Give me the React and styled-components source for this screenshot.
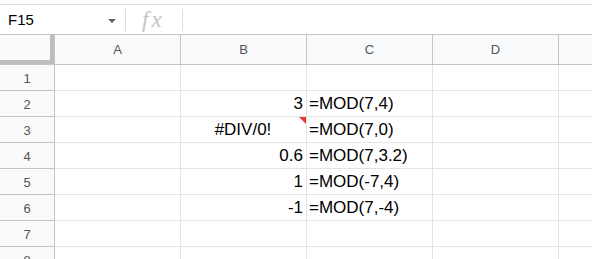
import React from 'react'
import styled, { createGlobalStyle } from 'styled-components'

const Global = createGlobalStyle`
    html, body {
        margin: 0;
        padding: 0;
        background: #fff;
        overflow: hidden;
    }
    body {
        font-family: "Liberation Sans", Arial, sans-serif;
    }
    *, *::before, *::after {
        box-sizing: border-box;
    }
`

const Page = styled.div`
    width: 592px;
    height: 259px;
    overflow: hidden;
    background: #fff;
`

const TopStrip = styled.div`
    height: 5px;
    border-bottom: 1px solid #e0e0e0;
`

const FormulaBar = styled.div`
    display: flex;
    align-items: center;
    height: 29px;
`

const NameBox = styled.div`
    display: flex;
    align-items: center;
    justify-content: space-between;
    width: 125px;
    padding: 0 9px 0 8px;
    font-size: 15px;
    color: #000;
`

const Caret = styled.span`
    width: 0;
    height: 0;
    margin-top: 2px;
    border-left: 4px solid transparent;
    border-right: 4px solid transparent;
    border-top: 4px solid #5f6368;
`

const Divider = styled.div`
    width: 1px;
    height: 22px;
    background: #dadce0;
`

const Fx = styled.div`
    width: 56px;
    padding-left: 16px;
    font-family: "Liberation Serif", "Times New Roman", serif;
    font-style: italic;
    font-size: 23px;
    letter-spacing: 3px;
    color: #c4c4c4;
    line-height: 1;
`

const Sheet = styled.div`
    border-top: 1px solid #c4c4c4;
`

const Row = styled.div`
    display: flex;
    height: ${p => p.$h}px;
`

const Corner = styled.div`
    flex: none;
    width: 55px;
    background: #f8f9fa;
    border-right: 1px solid #c4c4c4;
    border-bottom: 1px solid #c4c4c4;
    box-shadow: inset -4px -4px 0 #bdbdbd;
`

const ColHead = styled.div`
    flex: none;
    width: 126px;
    display: flex;
    align-items: center;
    justify-content: center;
    background: #f8f9fa;
    border-right: 1px solid #c4c4c4;
    border-bottom: 1px solid #c4c4c4;
    font-size: 13px;
    color: #555;
`

const RowHead = styled(ColHead)`
    width: 55px;
    padding-top: 1px;
`

const Cell = styled.div`
    position: relative;
    flex: none;
    width: 126px;
    display: flex;
    align-items: flex-end;
    justify-content: ${p => p.$align === 'right' ? 'flex-end' : p.$align === 'center' ? 'center' : 'flex-start'};
    padding: 0 3px 2px 2px;
    border-right: 1px solid #e2e3e3;
    border-bottom: 1px solid #e2e3e3;
    font-size: 17px;
    line-height: 20px;
    color: #000;
    white-space: nowrap;
`

const ErrorMark = styled.span`
    position: absolute;
    top: 0;
    right: 0;
    width: 0;
    height: 0;
    border-top: 7px solid #e53935;
    border-left: 7px solid transparent;
`

// last column is only partly in view, its letter falls outside
const columns = ['A', 'B', 'C', 'D', '']

const data = [
    { n: 1 },
    { n: 2, b: '3', c: '=MOD(7,4)' },
    { n: 3, b: '#DIV/0!', c: '=MOD(7,0)', error: true },
    { n: 4, b: '0.6', c: '=MOD(7,3.2)' },
    { n: 5, b: '1', c: '=MOD(-7,4)' },
    { n: 6, b: '-1', c: '=MOD(7,-4)' },
    { n: 7 },
    { n: 8 },
]

const App = () => {
    return (
        <Page>
            <Global />
            <TopStrip />
            <FormulaBar>
                <NameBox>
                    F15
                    <Caret />
                </NameBox>
                <Divider />
                <Fx>fx</Fx>
                <Divider />
            </FormulaBar>
            <Sheet>
                <Row $h={30}>
                    <Corner />
                    {columns.map((c, i) => <ColHead key={i}>{c}</ColHead>)}
                </Row>
                {data.map(r => (
                    <Row $h={26} key={r.n}>
                        <RowHead>{r.n}</RowHead>
                        <Cell />
                        <Cell $align={r.error ? 'center' : 'right'}>
                            {r.b}
                            {r.error && <ErrorMark />}
                        </Cell>
                        <Cell>{r.c}</Cell>
                        <Cell />
                        <Cell />
                    </Row>
                ))}
            </Sheet>
        </Page>
    )
}

export default App
